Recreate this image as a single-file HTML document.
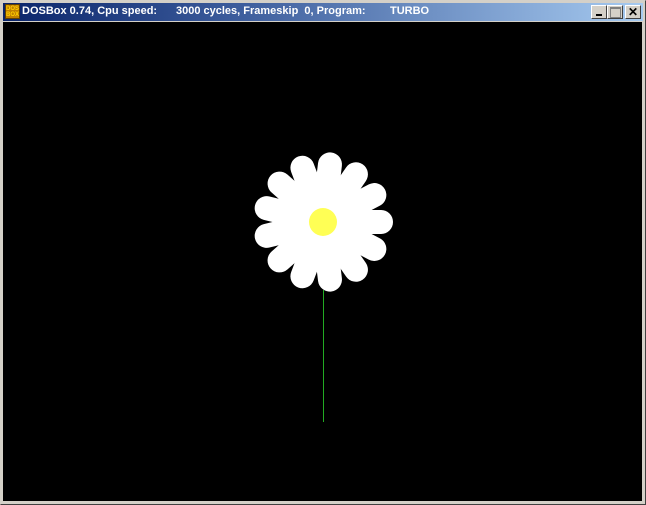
<!DOCTYPE html>
<html><head><style>
html,body{margin:0;padding:0;}
body{width:646px;height:505px;background:#d4d0c8;position:relative;overflow:hidden;font-family:"Liberation Sans",sans-serif;}
.frame{position:absolute;left:0;top:0;width:644px;height:503px;border-top:1px solid #d4d0c8;border-left:1px solid #d4d0c8;border-right:1px solid #404040;border-bottom:1px solid #404040;}
.title{position:absolute;left:3px;top:3px;width:640px;height:18px;background:linear-gradient(to right,#0a246a 0%,#3a5a9a 35%,#a6caf0 100%);}
.t{position:absolute;top:5px;color:#fff;font-weight:bold;font-size:11px;white-space:pre;letter-spacing:0px;}
.btn{position:absolute;top:5px;width:16px;height:14px;background:#d4d0c8;box-sizing:border-box;border-top:1px solid #fff;border-left:1px solid #fff;border-right:1px solid #404040;border-bottom:1px solid #404040;}
.screen{position:absolute;left:3px;top:22px;width:639px;height:479px;background:#000;}
</style></head><body>
<div class="frame"></div>
<div class="title"></div>
<div style="position:absolute;left:5px;top:4px;width:15px;height:15px;background:#c08000;border:1px solid #604000;box-sizing:border-box;font-size:6px;line-height:6px;color:#ffd000;font-weight:bold;text-align:center;padding-top:1px;">DOS<br>BOX</div>
<div class="t" style="left:22px;">DOSBox 0.74, Cpu speed:</div>
<div class="t" style="left:176px;">3000 cycles, Frameskip  0, Program:</div>
<div class="t" style="left:390px;">TURBO</div>
<div class="btn" style="left:591px;"><div style="position:absolute;left:4px;top:8px;width:6px;height:2px;background:#000"></div></div>
<div class="btn" style="left:607px;"><div style="position:absolute;left:2px;top:1px;width:9px;height:8px;border:1px solid #808080;border-top-width:2px;"></div></div>
<div class="btn" style="left:625px;font-size:12px;font-weight:bold;line-height:12px;text-align:center;color:#000;">✕</div>
<div class="screen"></div>
<svg style="position:absolute;left:0;top:0" width="646" height="505">
<line x1="323.5" y1="290" x2="323.5" y2="422" stroke="#22aa22" stroke-width="1"/>
<g transform="translate(323,222)" stroke="#fff" stroke-linecap="round">
<g stroke-width="24">
<line x1="15" y1="0" x2="58" y2="0" transform="rotate(0)"/>
<line x1="15" y1="0" x2="58" y2="0" transform="rotate(27.7)"/>
<line x1="15" y1="0" x2="58" y2="0" transform="rotate(55.4)"/>
<line x1="15" y1="0" x2="58" y2="0" transform="rotate(83.1)"/>
<line x1="15" y1="0" x2="58" y2="0" transform="rotate(110.8)"/>
<line x1="15" y1="0" x2="58" y2="0" transform="rotate(138.5)"/>
<line x1="15" y1="0" x2="58" y2="0" transform="rotate(166.2)"/>
<line x1="15" y1="0" x2="58" y2="0" transform="rotate(193.8)"/>
<line x1="15" y1="0" x2="58" y2="0" transform="rotate(221.5)"/>
<line x1="15" y1="0" x2="58" y2="0" transform="rotate(249.2)"/>
<line x1="15" y1="0" x2="58" y2="0" transform="rotate(276.9)"/>
<line x1="15" y1="0" x2="58" y2="0" transform="rotate(304.6)"/>
<line x1="15" y1="0" x2="58" y2="0" transform="rotate(332.3)"/>
</g>
</g>
<circle cx="323" cy="222" r="32" fill="#fff"/>
<circle cx="323" cy="222" r="14" fill="#ffff55"/>
</svg>
</body></html>
